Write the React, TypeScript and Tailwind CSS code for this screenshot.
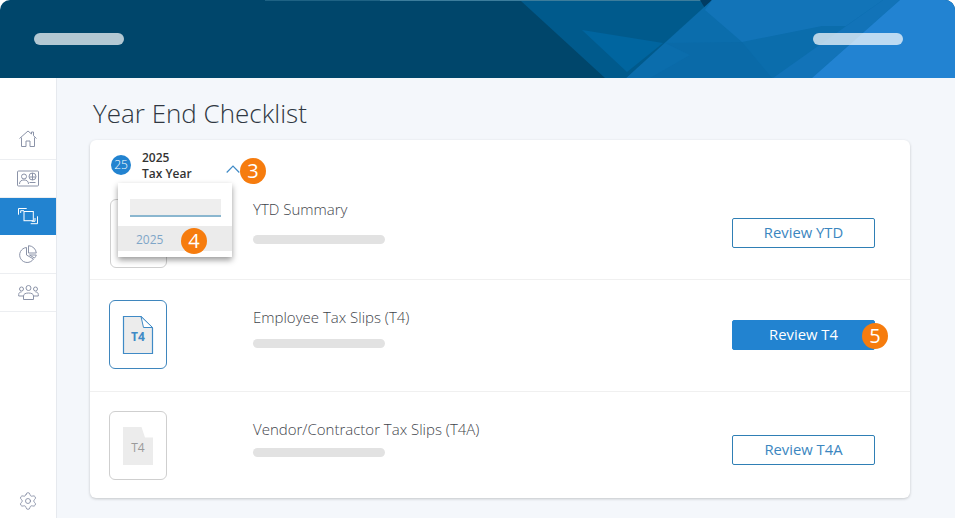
import React from "react";
import { Settings } from "lucide-react";

const Bar = () => <div className="h-[9px] w-[132px] rounded-full bg-[#e2e2e2]" />;

const Badge = ({ n, cls }: { n: string; cls: string }) => (
  <div className={`absolute flex h-[26px] w-[26px] items-center justify-center rounded-full bg-[#f67c0e] text-[20px] leading-none text-white ${cls}`}>{n}</div>
);

const Doc = ({ active }: { active?: boolean }) => (
  <svg width="32" height="40" viewBox="0 0 32 40">
    {active ? (
      <>
        <path d="M1.500 1.500H19L30.500 13V38.500H1.500Z" fill="#ececec" stroke="#3f8ac6" strokeWidth="1.200" />
        <path d="M19 1.500 21.500 12.500H30.500Z" fill="#fff" stroke="#3f8ac6" strokeWidth="1" />
      </>
    ) : (
      <path d="M1 1H19.500L23 11.500H31V39H1Z" fill="#ececec" />
    )}
  </svg>
);

const IconBox = ({ active, cls, label }: { active?: boolean; cls: string; label?: boolean }) => (
  <div className={`relative flex h-[69px] shrink-0 items-center justify-center rounded-[6px] border ${active ? "border-[#3f86bd]" : "border-[#cfcfcf]"} ${cls}`}>
    {label && (
      <>
        <Doc active={active} />
        <span className={`absolute left-0 right-0 top-[28px] text-center text-[12px] leading-[16px] ${active ? "font-bold text-[#3f8ac6]" : "text-[#9a9a9a]"}`}>T4</span>
      </>
    )}
  </div>
);

const Home = () => (
  <svg width="20" height="18" viewBox="0 0 20 18" fill="none" stroke="#8b93a8" strokeWidth="1">
    <path d="M1.500 8.500 10 1l3.500 3V2h2v3.700l3 2.800M3.500 7.500V16.500H8V11h4v5.500h4.500V7.500" />
  </svg>
);
const Contact = () => (
  <svg width="22" height="17" viewBox="0 0 22 17" fill="none" stroke="#8b93a8" strokeWidth="1">
    <rect x="0.500" y="1" width="21" height="15" rx="1" />
    <circle cx="7" cy="6.500" r="2.500" />
    <path d="M2.500 14c0-3 2-4 4.500-4s4.500 1 4.500 4" />
    <circle cx="15.500" cy="6.500" r="3.500" />
    <path d="M12 7h7M15.500 3v7M12.500 12.500h6" />
  </svg>
);
const Layers = () => (
  <svg width="20" height="17" viewBox="0 0 20 17" fill="none" stroke="#fff" strokeWidth="1">
    <path d="M.5 6.700V.5H8.700M2.700 5V2.700H6" />
    <rect x="6" y="3.500" width="9.300" height="9.200" />
    <path d="M19.500 8.300V15.700H12.700M17 10v3.300H13.700" />
  </svg>
);
const Pie = () => (
  <svg width="18" height="18" viewBox="0 0 18 18" fill="none" stroke="#8b93a8" strokeWidth="1">
    <path d="M7.500 2.500A7.500 7.500 0 1 0 14.500 14L7.500 10Z" />
    <path d="M9.500 .7A8 8 0 0 1 17.300 8H9.500Z" />
    <path d="M10.500 10H17.300A8 8 0 0 1 15.500 13Z" />
  </svg>
);
const People = () => (
  <svg width="21" height="15" viewBox="0 0 21 15" fill="none" stroke="#8b93a8" strokeWidth="1">
    <circle cx="10.500" cy="3" r="2.500" />
    <circle cx="3.500" cy="4" r="2" />
    <circle cx="17.500" cy="4" r="2" />
    <path d="M5.500 14.500V11c0-2 2-3 5-3s5 1 5 3v3.500Z" />
    <path d="M5 11H.7V9.500c0-1.500 1-2.500 2.800-2.500M16 11h4.300V9.500c0-1.500-1-2.500-2.800-2.500" />
  </svg>
);

const Nav = ({ active, cls, children }: { active?: boolean; cls: string; children: React.ReactNode }) => (
  <div className={`flex items-center justify-center ${active ? "bg-[#2283d0]" : "border-b border-[#eceef1]"} ${cls}`}>{children}</div>
);

const Review = ({ label, solid, cls }: { label: string; solid?: boolean; cls: string }) => (
  <div className={`ml-auto flex h-[30px] w-[143px] shrink-0 items-center justify-center rounded-[2px] border pb-px text-[14.800px] ${solid ? "border-[#2283d0] bg-[#2283d0] text-white" : "border-[#2f7fb5] bg-white text-[#3b86c0]"} ${cls}`}>
    {label}
  </div>
);

const Info = ({ title, cls, barCls }: { title: string; cls: string; barCls: string }) => (
  <div className={cls}>
    <div className="whitespace-nowrap text-[15px] font-light leading-[20px] text-[#3f454c]">{title}</div>
    <div className={barCls}><Bar /></div>
  </div>
);

export default function App() {
  return (
    <div className="flex h-[518px] w-[955px] flex-col overflow-hidden bg-white font-['Open_Sans',sans-serif]">
      <header className="relative flex h-[78px] shrink-0 items-center justify-between overflow-hidden rounded-t-[10px] bg-[#00466b] pl-[34px] pr-[52px]">
        <svg className="absolute inset-0" width="955" height="78" viewBox="0 0 955 78">
          <rect x="265" y="0" width="115" height="1" fill="#1e6284" />
          <rect x="380" y="0" width="330" height="1" fill="#3c7d9c" />
          <polygon points="521,1 712,1 626,78 605,78" fill="#005a8c" />
          <polygon points="582,30 663,43 627,72" fill="#00659f" />
          <polygon points="700,0 716,0 706,10" fill="#013c63" />
          <polygon points="712,0 955,0 955,78 626,78" fill="#0b6dac" />
          <polygon points="712,0 883,0 846,26 822,26 742,42 705,10" fill="#1274b8" />
          <polygon points="665,43 742,42 772,78 650,78 690,55" fill="#0a6aa8" />
          <polygon points="883,0 900,0 812,78 773,78" fill="#1273b8" />
          <polygon points="900,0 955,0 955,78 812,78" fill="#2283d2" />
        </svg>
        <div className="relative h-[12px] w-[90px] rounded-full bg-white/70" />
        <div className="relative h-[12px] w-[90px] rounded-full bg-white/70" />
      </header>
      <div className="flex min-h-0 flex-1">
        <aside className="flex w-[57px] shrink-0 flex-col border-r border-[#e6e9ee] bg-white pt-[43px]">
          <Nav cls="h-[39px] pb-[2px]"><Home /></Nav>
          <Nav cls="h-[38px]"><Contact /></Nav>
          <Nav active cls="h-[37px]"><Layers /></Nav>
          <Nav cls="h-[39px]"><Pie /></Nav>
          <Nav cls="h-[38px]"><People /></Nav>
          <div className="mt-auto flex justify-center pb-[7px]">
            <Settings size={20} strokeWidth={1} color="#7f88a0" />
          </div>
        </aside>
        <main className="min-w-0 flex-1 bg-[#f4f7fb] pl-[33px] pr-[45px]">
          <h1 className="ml-[3px] mt-[17px] h-[45px] text-[26px] font-light leading-[36px] text-[#2f3742]">Year End Checklist</h1>
          <section className="relative h-[358px] rounded-[6px] bg-white shadow-[0_1px_3px_rgba(0,0,0,0.2)]">
            <div className="flex h-[59px] items-start pl-[21px] pt-[15px]">
              <div className="flex h-[20px] w-[20px] items-center justify-center rounded-full bg-[#2283d0] text-[12px] font-light text-white">25</div>
              <div className="ml-[11px] -mt-[5px] text-[12px] font-semibold leading-[16px] text-[#333]">
                <div>2025</div>
                <div className="whitespace-nowrap">Tax Year</div>
              </div>
              <svg className="ml-[34px] mt-[10px]" width="14" height="8" viewBox="0 0 14 8" fill="none" stroke="#3f8ac6" strokeWidth="1.200">
                <path d="M.7 7.500 7 1l6.300 6.500" />
              </svg>
            </div>
            <Badge n="3" cls="left-[150px] top-[18px]" />
            <div className="flex h-[81px] items-start border-b border-[#f0f0f0] pl-[20px] pr-[35px]">
              <IconBox cls="w-[57px]" />
              <Info title="YTD Summary" cls="ml-[86px]" barCls="mt-[16px]" />
              <Review label="Review YTD" cls="mt-[19px]" />
            </div>
            <div className="flex h-[112px] items-start border-b border-[#f0f0f0] pl-[19px] pr-[35px] pt-[20px]">
              <IconBox active label cls="w-[58px]" />
              <Info title="Employee Tax Slips (T4)" cls="ml-[86px] pt-[7px]" barCls="mt-[12px]" />
              <Review label="Review T4" solid cls="mt-[20px]" />
            </div>
            <div className="flex h-[106px] items-start pl-[19px] pr-[35px] pt-[19px]">
              <IconBox label cls="w-[58px]" />
              <Info title="Vendor/Contractor Tax Slips (T4A)" cls="ml-[86px] pt-[8px]" barCls="mt-[9px]" />
              <Review label="Review T4A" cls="mt-[24px]" />
            </div>
            <div className="absolute left-[28px] top-[43px] h-[74px] w-[114px] bg-white pt-[16px] shadow-[0_3px_6px_rgba(0,0,0,0.4)]">
              <div className="mx-[12px] h-[18px] w-[91px] border-b-2 border-[#8ab6cf] bg-[#eeeeee]" />
              <div className="mt-[9px] flex h-[25px] items-center bg-[#ebebeb] pl-[18px] pt-[3px] text-[12px] text-[#7fa6c8]">2025</div>
            </div>
            <Badge n="4" cls="left-[91px] top-[88px]" />
            <Badge n="5" cls="left-[772px] top-[183px]" />
          </section>
        </main>
      </div>
    </div>
  );
}
